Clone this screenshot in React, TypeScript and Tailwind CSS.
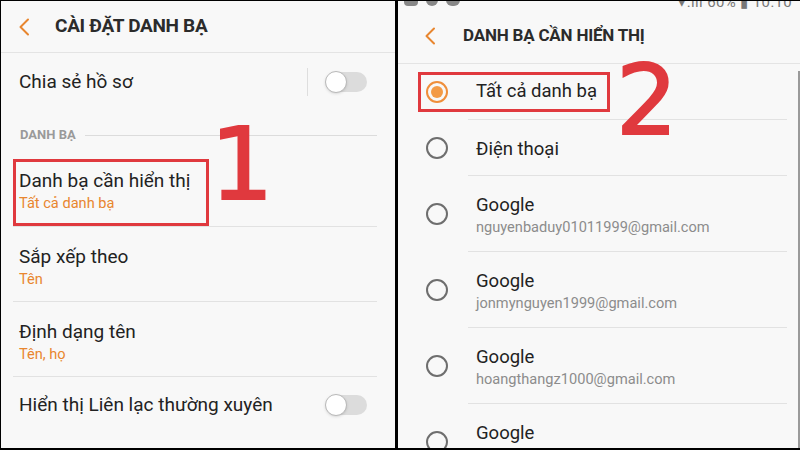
import React from "react";

const ORANGE = "text-[#e8862f]";

function Chevron() {
  return (
    <svg width="12" height="18" viewBox="0 0 12 18" fill="none">
      <path d="M10 1.5 L2.5 9 L10 16.5" stroke="#e8862f" strokeWidth="2" strokeLinecap="round" strokeLinejoin="round" />
    </svg>
  );
}

function Toggle() {
  return (
    <div className="relative w-[42px] h-[26px] flex items-center">
      <div className="absolute left-[4px] right-0 h-[20px] rounded-full bg-[#dcdcdc]" />
      <div className="absolute left-0 w-[22px] h-[22px] rounded-full bg-white border border-[#b9b9b9] shadow-sm" />
    </div>
  );
}

function Radio({ checked }: { checked?: boolean }) {
  return (
    <div
      className={`w-[22px] h-[22px] rounded-full border-2 flex items-center justify-center shrink-0 ${
        checked ? "border-[#ef8e3a]" : "border-[#6e6e6e]"
      }`}
    >
      {checked && <div className="w-[12px] h-[12px] rounded-full bg-[#f39a45]" />}
    </div>
  );
}

function Divider({ className }: { className: string }) {
  return <div className={`h-px bg-[#e2e2e2] ${className}`} />;
}

function SettingRow({ title, value, h }: { title: string; value: string; h: string }) {
  return (
    <div className={`flex flex-col justify-center pl-[18px] pt-[4px] ${h}`}>
      <div className="text-[19px] leading-[25px] text-[#222]">{title}</div>
      <div className={`text-[14.6px] leading-[20px] ${ORANGE}`}>{value}</div>
    </div>
  );
}

function SettingsPanel() {
  return (
    <div className="relative w-[394px] h-full bg-[#f8f8f8] overflow-hidden">
      <div className="h-[52px] flex items-center pl-[17px] border-b border-[#e4e4e4]">
        <Chevron />
        <span className="ml-[25px] text-[19px] font-bold tracking-[-0.3px] text-[#2b2b2b]">
          CÀI ĐẶT DANH BẠ
        </span>
      </div>

      <div className="h-[58px] flex items-center pl-[18px] pr-[28px]">
        <span className="flex-1 text-[19px] text-[#222]">Chia sẻ hồ sơ</span>
        <div className="w-px h-[28px] bg-[#dedede] mr-[17px]" />
        <Toggle />
      </div>

      <div className="h-[48px] flex items-center pl-[19px] pr-[18px]">
        <span className="text-[13px] font-bold text-[#9a9a9a] mr-[9px]">DANH BẠ</span>
        <div className="flex-1 h-px bg-[#dcdcdc]" />
      </div>

      <div className="h-[67px] flex items-center pl-[12px]">
        <div className="w-[196px] h-[67px] border-[3px] border-[#e0393e] flex flex-col justify-center pl-[3px] pb-[4px]">
          <div className="text-[19px] leading-[25px] text-[#222]">Danh bạ cần hiển thị</div>
          <div className={`text-[14.6px] leading-[20px] ${ORANGE}`}>Tất cả danh bạ</div>
        </div>
      </div>
      <Divider className="ml-[12px] mr-[18px]" />

      <SettingRow title="Sắp xếp theo" value="Tên" h="h-[74px]" />
      <Divider className="ml-[12px] mr-[18px]" />
      <SettingRow title="Định dạng tên" value="Tên, họ" h="h-[74px]" />
      <Divider className="ml-[12px] mr-[18px]" />

      <div className="h-[56px] flex items-center pl-[18px] pr-[28px]">
        <span className="flex-1 text-[19px] text-[#222]">Hiển thị Liên lạc thường xuyên</span>
        <Toggle />
      </div>

      {/* step marker */}
      <div className="absolute left-[209px] top-[114px] text-[100px] leading-none text-[#e0393e] [-webkit-text-stroke:2px_#e0393e] font-['DejaVu_Sans',sans-serif]">
        1
      </div>
    </div>
  );
}

const ACCOUNTS = [
  "nguyenbaduy01011999@gmail.com",
  "jonmynguyen1999@gmail.com",
  "hoangthangz1000@gmail.com",
  "",
];

function ContactsPanel() {
  return (
    <div className="relative flex-1 h-full bg-[#f8f8f8] overflow-hidden">
      {/* status bar, scrolled mostly out of view */}
      <div className="h-[8px] overflow-hidden relative">
        <div className="absolute -top-[7px] left-[6px] flex gap-[8px]">
          <div className="w-[14px] h-[12px] rounded-sm bg-[#888]" />
          <div className="w-[12px] h-[12px] rounded-full bg-[#888]" />
          <div className="w-[14px] h-[12px] rounded-full bg-[#888]" />
        </div>
        <div className="absolute -top-[10px] right-[8px] text-[15px] text-[#777] tracking-wide">
          ▾.ıll 60% ▮ 10:10
        </div>
      </div>

      <div className="h-[55px] flex items-center pl-[26px] border-b border-[#e4e4e4]">
        <Chevron />
        <span className="ml-[27px] text-[17px] font-bold tracking-[-0.2px] text-[#2b2b2b]">
          DANH BẠ CẦN HIỂN THỊ
        </span>
      </div>

      <div className="h-[55px] flex items-center pl-[20px]">
        <div className="h-[40px] w-[192px] border-[3px] border-[#e0393e] flex items-center pl-[5px] gap-[28px]">
          <Radio checked />
          <span className="text-[18.5px] text-[#222]">Tất cả danh bạ</span>
        </div>
      </div>
      <Divider className="ml-[70px] mr-[13px]" />

      <div className="h-[55px] flex items-center pl-[28px] gap-[28px]">
        <Radio />
        <span className="text-[18.5px] text-[#222] pt-[4px]">Điện thoại</span>
      </div>

      {ACCOUNTS.map((email, i) => (
        <div key={i}>
          <Divider className="ml-[70px] mr-[13px]" />
          <div className="h-[75px] flex items-center pl-[28px] gap-[28px]">
            <Radio />
            <div className="flex flex-col pt-[2px]">
              <span className="text-[18.5px] leading-[24px] text-[#222]">Google</span>
              <span className="h-[20px] text-[14.6px] leading-[20px] text-[#8c8c8c]">{email}</span>
            </div>
          </div>
        </div>
      ))}

      {/* scrollbar */}
      <div className="absolute right-0 top-[70px] bottom-0 w-[2px] bg-[#9a9a9a]" />

      {/* step marker */}
      <div className="absolute left-[218px] top-[51px] text-[97px] leading-none text-[#e0393e] [-webkit-text-stroke:2px_#e0393e] font-['DejaVu_Sans',sans-serif]">
        2
      </div>
    </div>
  );
}

export default function App() {
  return (
    <div className="w-[800px] h-[450px] bg-black flex gap-[3px] pl-[1px] pt-[1px] pb-[2px] font-['Roboto',sans-serif] overflow-hidden">
      <SettingsPanel />
      <ContactsPanel />
    </div>
  );
}
